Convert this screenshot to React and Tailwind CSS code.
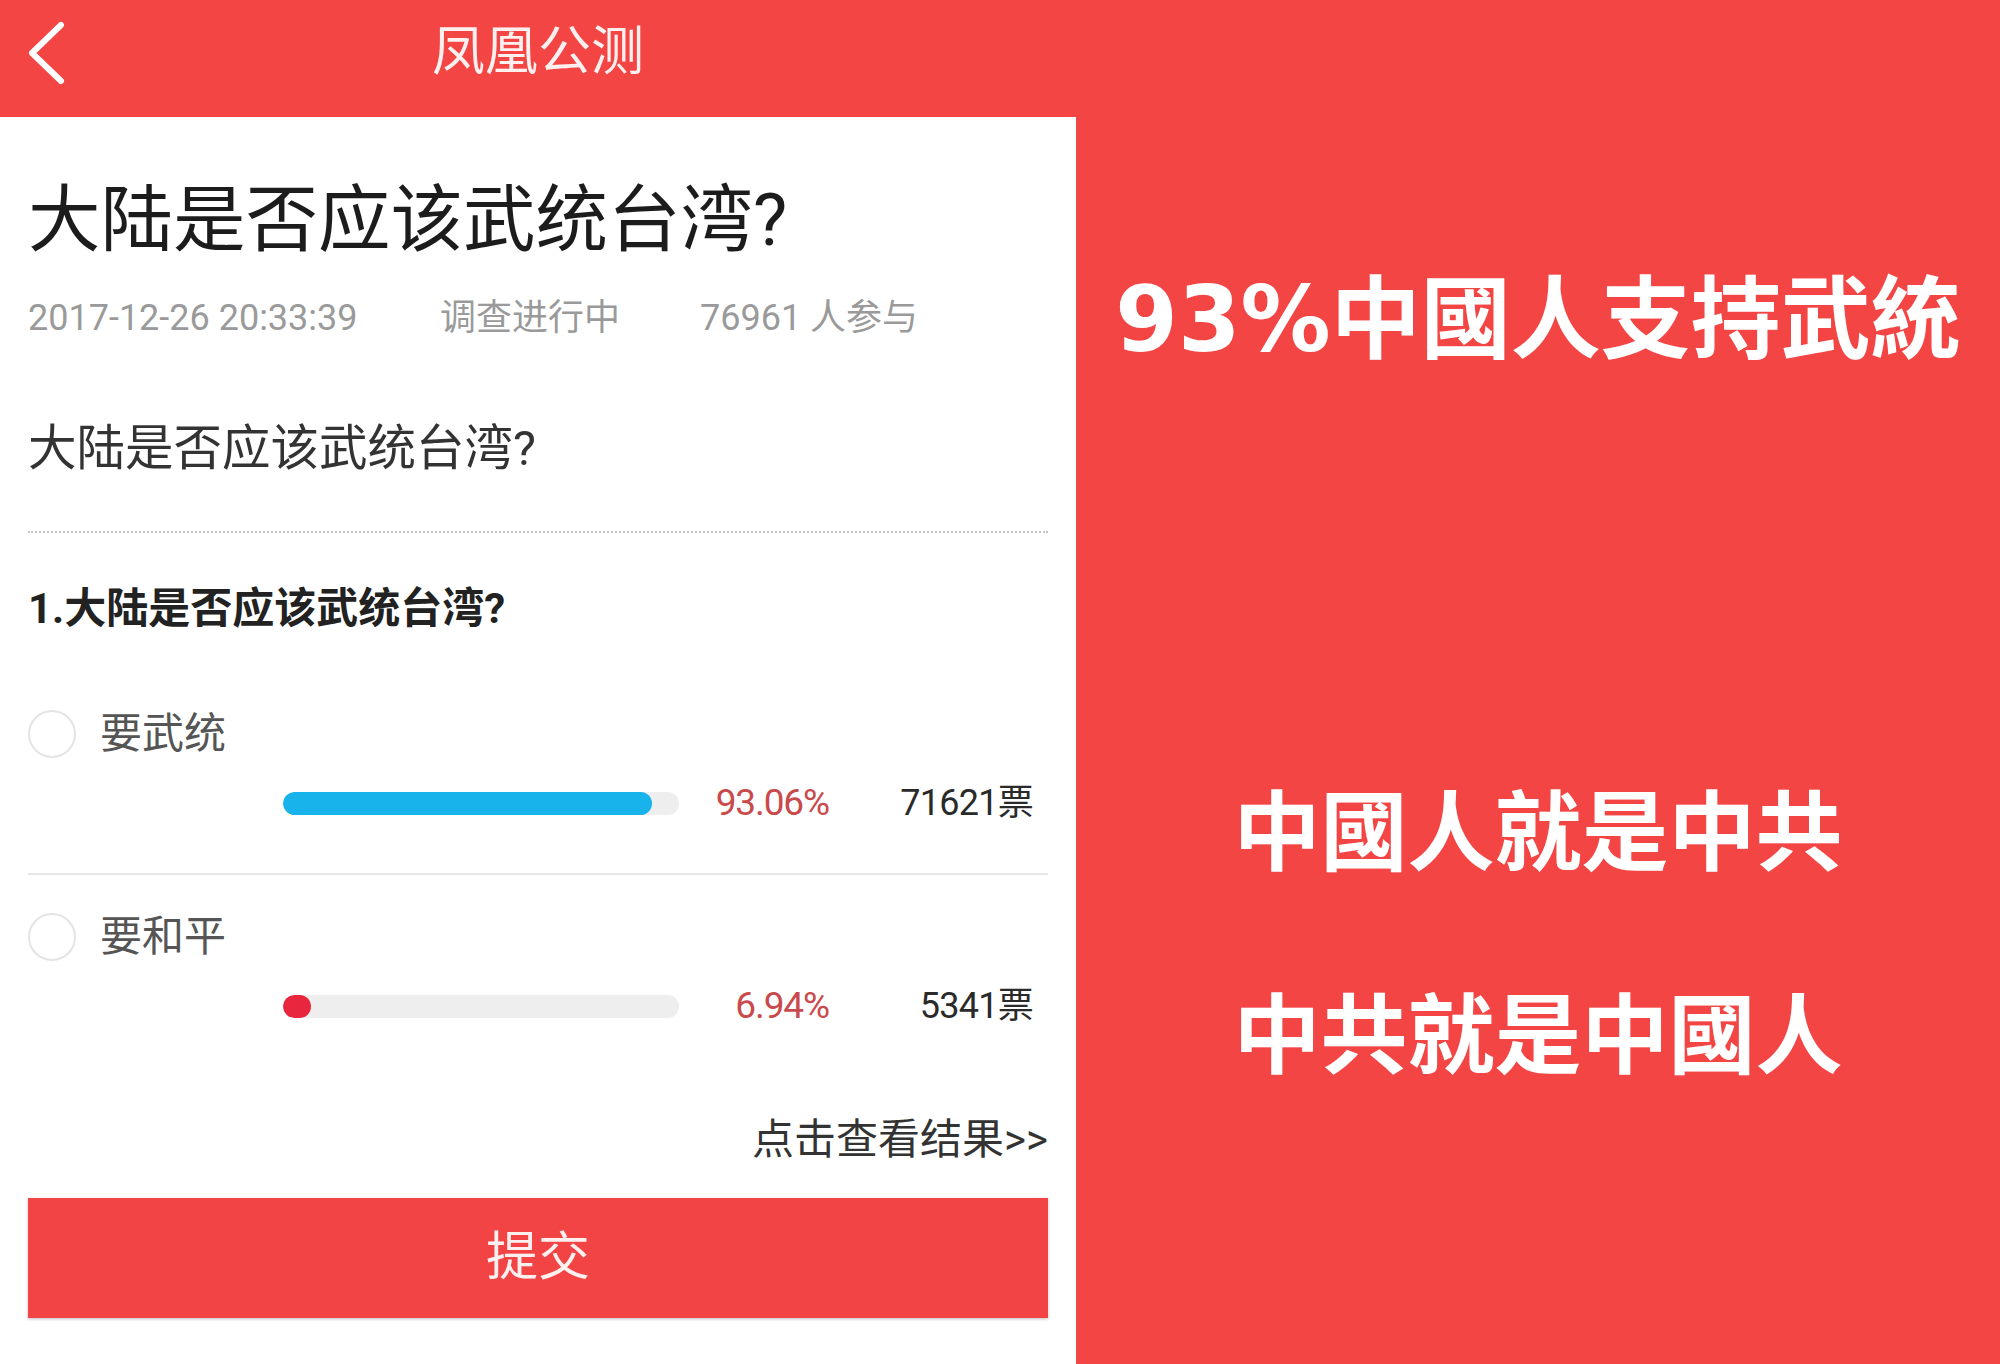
import React from 'react';

const cjk = "font-['Roboto','Noto_Sans_CJK_SC',sans-serif]";

function Radio() {
  return <div className="w-[48px] h-[48px] rounded-full border-2 border-[#e4e4e4] bg-white shrink-0" />;
}

function ResultRow({ fill, pct, votes }) {
  return (
    <div className="flex items-center h-[40px] mt-[25px]">
      <div className="ml-[255px] w-[396px] h-[23px] rounded-full bg-[#eeeeee] overflow-hidden flex">
        {fill}
      </div>
      <div className="w-[150px] text-right text-[37px] leading-[40px] tracking-[-0.03em] text-[#c94a4c]">{pct}</div>
      <div className="w-[204px] text-right text-[36px] leading-[40px] tracking-[-0.02em] text-[#2a2a2a]">{votes}</div>
    </div>
  );
}

export default function App() {
  return (
    <div className={`w-[2000px] h-[1364px] flex overflow-hidden ${cjk}`}>
      <div className="w-[1076px] h-full bg-white flex flex-col">
        <div className="h-[117px] shrink-0 bg-[#f44545] grid grid-cols-[1fr_auto_1fr] items-center pb-[14px]">
          <div className="pl-[26px] pt-[2px]">
            <svg width="40" height="64" viewBox="0 0 40 64">
              <polyline points="35,4 6,32 35,60" fill="none" stroke="#fff" strokeWidth="6" strokeLinecap="round" strokeLinejoin="round" />
            </svg>
          </div>
          <div className="text-[53px] leading-[56px] text-[#fff0f0]">凤凰公测</div>
          <div />
        </div>

        <div className="flex flex-col px-[28px]">
          <div className="mt-[68px] text-[72.5px] leading-[72px] text-[#1c1c1c]">大陆是否应该武统台湾?</div>

          <div className="mt-[41px] flex text-[36px] leading-[40px] text-[#9a9a9a]">
            <span className="w-[412px] text-[36px]">2017-12-26 20:33:39</span>
            <span className="w-[260px]">调查进行中</span>
            <span>76961 人参与</span>
          </div>

          <div className="mt-[87px] text-[48.5px] leading-[48px] text-[#333333]">大陆是否应该武统台湾?</div>

          <div className="mt-[58px] border-t-2 border-dotted border-[#c4c4c4]" />

          <div className="mt-[55px] text-[42px] leading-[42px] font-bold text-[#222222]">1.大陆是否应该武统台湾?</div>

          <div className="mt-[80px] flex items-center gap-[24px] h-[48px]">
            <Radio />
            <span className="text-[42px] leading-[48px] text-[#555555]">要武统</span>
          </div>
          <ResultRow
            fill={<div className="w-[369px] h-full rounded-full bg-[#17b3ea]" />}
            pct="93.06%"
            votes="71621票"
          />

          <div className="mt-[50px] border-t-2 border-[#e6e6e6]" />

          <div className="mt-[38px] flex items-center gap-[24px] h-[48px]">
            <Radio />
            <span className="text-[42px] leading-[48px] text-[#555555]">要和平</span>
          </div>
          <ResultRow
            fill={<div className="w-[28px] h-full rounded-full bg-[#e8263d]" />}
            pct="6.94%"
            votes="5341票"
          />

          <div className="mt-[93px] text-right text-[42px] leading-[42px] text-[#333333]">点击查看结果&gt;&gt;</div>

          <button className="mt-[37px] h-[120px] w-full bg-[#f24444] shadow-[0_1px_3px_rgba(0,0,0,0.25)] text-[52px] text-[#fff0f0] flex items-center justify-center">
            提交
          </button>
        </div>
      </div>

      <div className="flex-1 h-full bg-[#f44545] flex flex-col items-center pt-[276px] text-white font-['DejaVu_Sans','Noto_Sans_CJK_TC',sans-serif] font-bold">
        <div className="text-[90px] leading-[88px] whitespace-nowrap">93%中國人支持武統</div>
        <div className="mt-[426px] text-[87px] leading-[88px] whitespace-nowrap">中國人就是中共</div>
        <div className="mt-[115px] text-[87px] leading-[88px] whitespace-nowrap">中共就是中國人</div>
      </div>
    </div>
  );
}
